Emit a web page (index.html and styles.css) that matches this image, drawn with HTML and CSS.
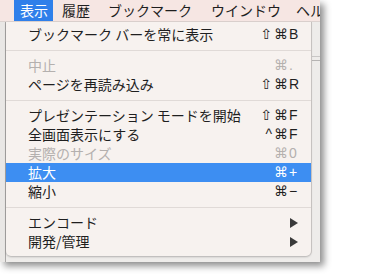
FILE: index.html
```html
<!DOCTYPE html>
<html lang="ja">
<head>
<meta charset="utf-8">
<link rel="stylesheet" href="styles.css">
</head>
<body>
<div class="shot">
  <div class="menubar">
    <span class="mb-item active">表示</span>
    <span class="mb-item m2">履歴</span>
    <span class="mb-item m3">ブックマーク</span>
    <span class="mb-item m4">ウインドウ</span>
    <span class="mb-item m5">ヘルプ</span>
  </div>
  <div class="desk">
    <div class="menu">
      <div class="row"><span class="label">ブックマーク バーを常に表示</span><span class="sc"><span class="mod">⇧⌘</span><span class="key">B</span></span></div>
      <div class="sep"></div>
      <div class="row disabled"><span class="label">中止</span><span class="sc"><span class="mod">⌘</span><span class="key">.</span></span></div>
      <div class="row"><span class="label">ページを再読み込み</span><span class="sc"><span class="mod">⇧⌘</span><span class="key">R</span></span></div>
      <div class="sep"></div>
      <div class="row"><span class="label">プレゼンテーション モードを開始</span><span class="sc"><span class="mod">⇧⌘</span><span class="key">F</span></span></div>
      <div class="row"><span class="label">全画面表示にする</span><span class="sc"><span class="mod">^⌘</span><span class="key">F</span></span></div>
      <div class="row disabled"><span class="label">実際のサイズ</span><span class="sc"><span class="mod">⌘</span><span class="key">0</span></span></div>
      <div class="row selected"><span class="label">拡大</span><span class="sc"><span class="mod">⌘</span><span class="key">+</span></span></div>
      <div class="row"><span class="label">縮小</span><span class="sc"><span class="mod">⌘</span><span class="key">−</span></span></div>
      <div class="sep"></div>
      <div class="row"><span class="label">エンコード</span><span class="arrow"><svg width="8" height="10" viewBox="0 0 8 10"><polygon points="0,0 8,5 0,10" fill="#3a3a3a"/></svg></span></div>
      <div class="row"><span class="label">開発/管理</span><span class="arrow"><svg width="8" height="10" viewBox="0 0 8 10"><polygon points="0,0 8,5 0,10" fill="#3a3a3a"/></svg></span></div>
    </div>
  </div>
</div>
</body>
</html>
```

FILE: styles.css
```css
html, body {
  margin: 0;
  padding: 0;
  background: #ffffff;
}

body {
  font-family: "Noto Sans CJK JP", "DejaVu Sans", sans-serif;
  width: 367px;
  height: 275px;
  overflow: hidden;
}

.shot {
  width: 320px;
  height: 262px;
  display: flex;
  flex-direction: column;
  overflow: hidden;
  box-shadow: 4px 4px 7px rgba(0, 0, 0, 0.45);
  background: #f3f1ef;
}

.menubar {
  height: 21px;
  flex: none;
  display: flex;
  align-items: stretch;
  padding-left: 14px;
  background: #f6e6e3;
  border-bottom: 1px solid #dcd2cf;
  white-space: nowrap;
  font-size: 14px;
  color: #1e1e1e;
}

.mb-item {
  display: flex;
  align-items: center;
  padding: 0 7px;
  line-height: 21px;
}

.mb-item.active {
  padding: 0 5px 0 6px;
  background: #2f7fea;
  color: #ffffff;
}

.mb-item.m2 { margin-left: 2px; }
.mb-item.m3 { margin-left: 4px; }
.mb-item.m4 { margin-left: 5px; }
.mb-item.m5 { margin-left: 1px; }

.desk {
  flex: 1;
  display: flex;
  align-items: flex-start;
  padding-left: 6px;
  background:
    linear-gradient(to right, #e9e7e5 0, #e9e7e5 5px, #a9a7a6 5px, #a9a7a6 6px, transparent 6px),
    linear-gradient(to bottom, transparent 34px, #c9c7c6 34px, #c9c7c6 35px, transparent 35px, transparent 38px, #b6b4b3 38px, #b6b4b3 39px, transparent 39px),
    #eeecea;
}

.menu {
  width: 305px;
  background: #f7f2ef;
  border-radius: 0 0 5px 5px;
  padding: 3px 0 5px;
  box-shadow: 1px 0 0 #c6c2c0, 0 1px 2px rgba(0, 0, 0, 0.25);
  font-size: 14px;
  color: #1f1f1f;
}

.row {
  height: 19px;
  display: flex;
  align-items: center;
  justify-content: space-between;
  padding: 0 12px 0 22px;
  white-space: nowrap;
}

.row.disabled {
  color: #b4b0ae;
}

.row.selected {
  background: #3d8ef2;
  color: #ffffff;
}

.label {
  line-height: 19px;
}

.sc {
  display: flex;
  align-items: center;
  font-family: "Liberation Sans", "DejaVu Sans", sans-serif;
  font-size: 14px;
  line-height: 19px;
}

.mod {
  text-align: right;
  letter-spacing: 2px;
  margin-right: -1px;
}

.key {
  width: 10px;
  text-align: left;
}

.arrow {
  display: flex;
  align-items: center;
  padding-right: 1px;
}

.sep {
  height: 1px;
  margin: 6px 0 5px;
  background: #e0dad7;
}
```
